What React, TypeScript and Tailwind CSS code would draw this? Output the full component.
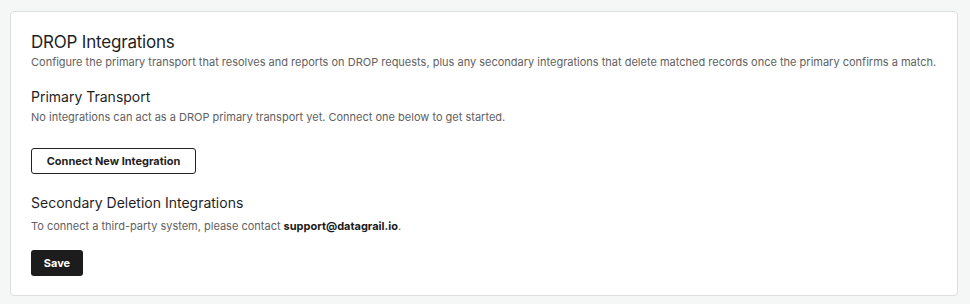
import React from "react";

export default function App() {
  return (
    <div
      className="w-[970px] h-[304px] bg-[#f5f6f6] pt-[11px] pl-[10px]"
      style={{ fontFamily: "Inter, 'Noto Sans', sans-serif" }}
    >
      <div className="w-[948px] h-[285px] bg-white border border-[#dcdedf] rounded-[4px] pl-[20px] pr-[16px] pt-[18px]">
        <h1 className="text-[17px] leading-[24px] text-[#1f1f1f] tracking-[-0.2px]">DROP Integrations</h1>
        <p className="text-[11px] leading-[16px] text-[#616161]">
          Configure the primary transport that resolves and reports on DROP requests, plus any secondary integrations that delete matched records once the primary confirms a match.
        </p>
        <h2 className="text-[14px] leading-[20px] text-[#1f1f1f] mt-[17px]">Primary Transport</h2>
        <p className="text-[11px] leading-[16px] text-[#616161] mt-[2px]">
          No integrations can act as a DROP primary transport yet. Connect one below to get started.
        </p>
        <button className="mt-[23px] h-[26px] w-[165px] border border-[#222] rounded-[3px] bg-white text-[11px] font-bold text-[#1f1f1f] flex items-center justify-center">
          Connect New Integration
        </button>
        <h2 className="text-[14px] leading-[20px] text-[#1f1f1f] mt-[19px]">Secondary Deletion Integrations</h2>
        <p className="text-[11px] leading-[16px] text-[#616161] mt-[5px]">
          To connect a third-party system, please contact <span className="font-bold text-[#1a1a1a]">support@datagrail.io</span>.
        </p>
        <button className="mt-[16px] h-[26px] w-[52px] rounded-[3px] bg-[#1c1c1c] text-white text-[11px] font-bold flex items-center justify-center">
          Save
        </button>
      </div>
    </div>
  );
}
